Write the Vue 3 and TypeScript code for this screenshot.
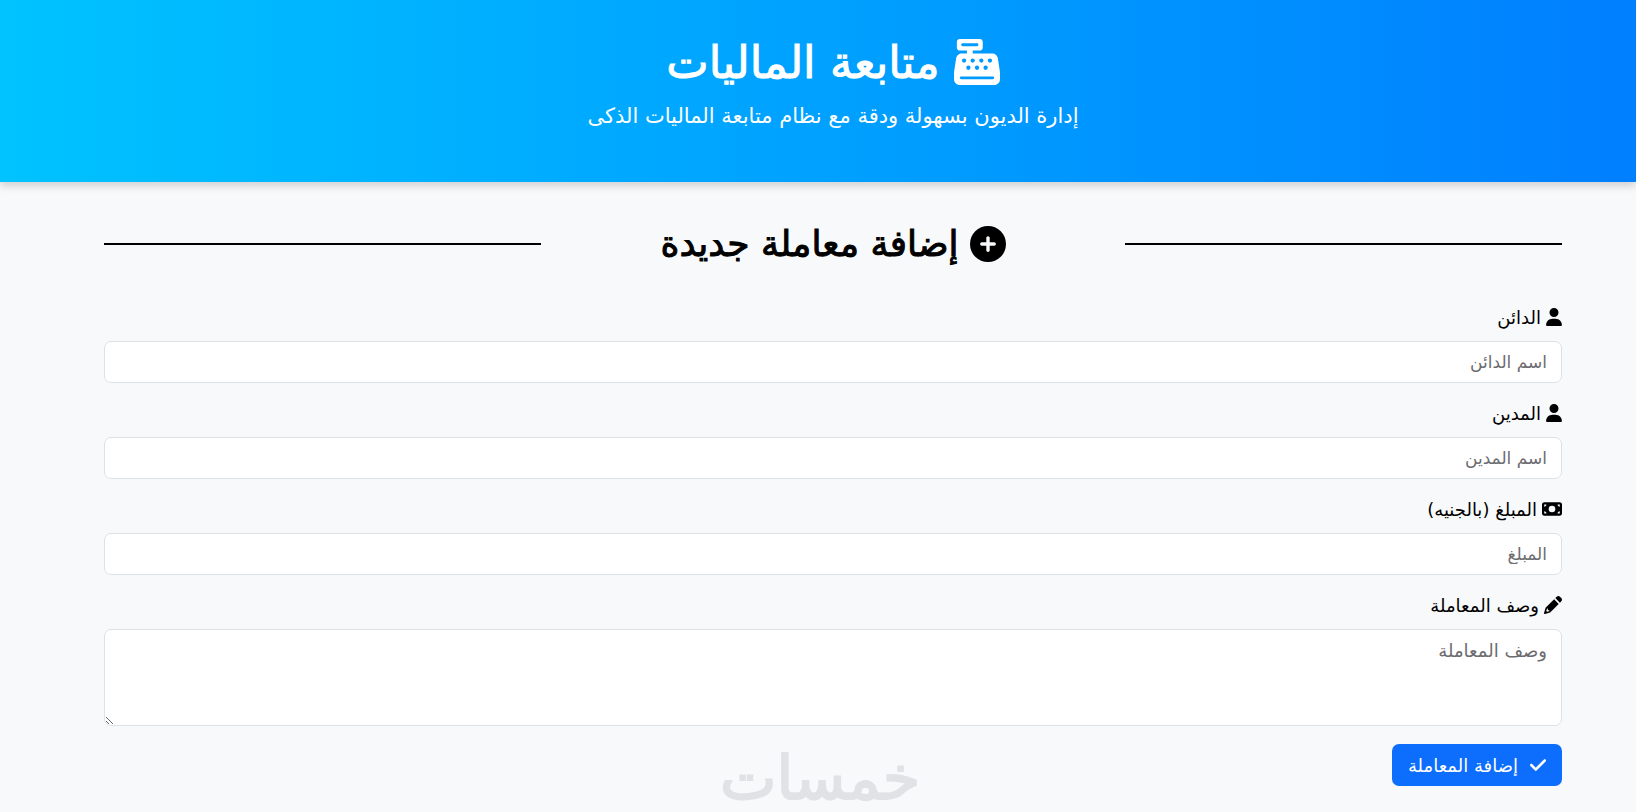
<script setup lang="ts">
interface Field {
  id: string
  label: string
  placeholder: string
  icon: 'person' | 'money' | 'pencil'
  type: 'text' | 'number' | 'area'
}

const fields: Field[] = [
  { id: 'creditor', label: 'الدائن', placeholder: 'اسم الدائن', icon: 'person', type: 'text' },
  { id: 'debtor', label: 'المدين', placeholder: 'اسم المدين', icon: 'person', type: 'text' },
  { id: 'amount', label: 'المبلغ (بالجنيه)', placeholder: 'المبلغ', icon: 'money', type: 'number' },
  { id: 'details', label: 'وصف المعاملة', placeholder: 'وصف المعاملة', icon: 'pencil', type: 'area' },
]
</script>

<template>
  <div class="page" dir="rtl" lang="ar">
    <header class="hero">
      <h1 class="hero-title">
        <svg class="hero-icon" viewBox="0 0 512 512" aria-hidden="true">
          <path fill="currentColor" d="M64 0C46.300 0 32 14.300 32 32V96c0 17.700 14.300 32 32 32h80v32H87c-31.600 0-58.500 23.100-63.300 54.400L1.100 364.100C.4 368.800 0 373.600 0 378.400V448c0 35.300 28.700 64 64 64H448c35.300 0 64-28.700 64-64V378.400c0-4.800-.4-9.600-1.100-14.400L488.200 214.400C483.500 183.100 456.600 160 425 160H208V128h80c17.700 0 32-14.300 32-32V32c0-17.700-14.300-32-32-32H64zM96 48H256c8.800 0 16 7.200 16 16s-7.200 16-16 16H96c-8.800 0-16-7.200-16-16s7.200-16 16-16zM64 432c0-8.800 7.200-16 16-16H432c8.800 0 16 7.200 16 16s-7.200 16-16 16H80c-8.800 0-16-7.200-16-16zm48-168a24 24 0 1 1 0-48 24 24 0 1 1 0 48zm120-24a24 24 0 1 1-48 0 24 24 0 1 1 48 0zm-72 104a24 24 0 1 1 0-48 24 24 0 1 1 0 48zM328 240a24 24 0 1 1-48 0 24 24 0 1 1 48 0zm-72 104a24 24 0 1 1 0-48 24 24 0 1 1 0 48zM424 240a24 24 0 1 1-48 0 24 24 0 1 1 48 0zm-72 104a24 24 0 1 1 0-48 24 24 0 1 1 0 48z" />
        </svg>
        <span>متابعة الماليات</span>
      </h1>
      <p class="hero-lead">إدارة الديون بسهولة ودقة مع نظام متابعة الماليات الذكى</p>
    </header>

    <main class="content">
      <div class="section-head">
        <h2 class="section-title">
          <svg class="section-icon" viewBox="0 0 512 512" aria-hidden="true">
            <path fill="currentColor" d="M256 512A256 256 0 1 0 256 0a256 256 0 1 0 0 512zM232 344V280H168c-13.300 0-24-10.700-24-24s10.700-24 24-24h64V168c0-13.300 10.700-24 24-24s24 10.700 24 24v64h64c13.300 0 24 10.700 24 24s-10.700 24-24 24H280v64c0 13.300-10.700 24-24 24s-24-10.700-24-24z" />
          </svg>
          <span>إضافة معاملة جديدة</span>
        </h2>
      </div>

      <form class="form" @submit.prevent>
        <div v-for="f in fields" :key="f.id" class="field">
          <label class="label" :for="f.id">
            <svg v-if="f.icon === 'person'" class="icon person" viewBox="0 0 448 512" aria-hidden="true">
              <path fill="currentColor" d="M224 256A128 128 0 1 0 224 0a128 128 0 1 0 0 256zm-45.700 48C79.800 304 0 383.800 0 482.300C0 498.700 13.300 512 29.700 512H418.300c16.400 0 29.700-13.300 29.700-29.700C448 383.800 368.200 304 269.700 304H178.300z" />
            </svg>
            <svg v-else-if="f.icon === 'money'" class="icon money" viewBox="0 0 576 512" aria-hidden="true">
              <path fill="currentColor" fill-rule="evenodd" d="M64 64C28.700 64 0 92.700 0 128V384c0 35.300 28.700 64 64 64H512c35.300 0 64-28.700 64-64V128c0-35.300-28.700-64-64-64H64zm64 320H64V320c35.300 0 64 28.700 64 64zM64 192V128h64c0 35.300-28.700 64-64 64zM448 384c0-35.300 28.700-64 64-64v64H448zm64-192c-35.300 0-64-28.700-64-64h64v64zM288 160a96 96 0 1 1 0 192 96 96 0 1 1 0-192z" />
            </svg>
            <svg v-else class="icon pencil" viewBox="0 0 512 512" aria-hidden="true">
              <path fill="currentColor" d="M362.700 19.300L322 60 452 190l40.700-40.700c25-25 25-65.500 0-90.500L453.300 19.300c-25-25-65.500-25-90.500 0zM288 94L58.600 323.500c-10.400 10.400-18 23.300-22.200 37.400L1 481.200C-1.500 489.700 .8 498.800 7 505s15.300 8.500 23.700 6.100l120.300-35.400c14.100-4.200 27-11.800 37.400-22.200L418 224zM156 410v10c0 6-4 10-10 12l-56 16c-12-4-20-12-24-24l16-56c2-6 7-10 14-10h12v26c0 14 12 26 26 26z" />
            </svg>
            <span>{{ f.label }}</span>
          </label>
          <textarea v-if="f.type === 'area'" :id="f.id" class="control area" rows="3" :placeholder="f.placeholder"></textarea>
          <input v-else :id="f.id" class="control" :type="f.type" :placeholder="f.placeholder" />
        </div>

        <button class="submit" type="submit">
          <svg class="icon check" viewBox="0 0 448 512" aria-hidden="true">
            <path fill="currentColor" stroke="currentColor" stroke-width="16" d="M438.600 105.400c12.500 12.500 12.500 32.800 0 45.300l-256 256c-12.500 12.500-32.800 12.500-45.300 0l-128-128c-12.500-12.500-12.500-32.800 0-45.300s32.800-12.500 45.300 0L160 338.700 393.400 105.400c12.500-12.500 32.800-12.500 45.300 0z" />
          </svg>
          <span>إضافة المعاملة</span>
        </button>
      </form>
    </main>

    <div class="watermark">خمسات</div>
  </div>
</template>

<style>
body {
  margin: 0;
  background: #f8f9fb;
}
</style>

<style scoped>
.page {
  position: relative;
  min-height: 100vh;
  box-sizing: border-box;
  overflow: hidden;
  background: #f8f9fb;
  color: #000;
  font-family: "DejaVu Sans", sans-serif;
  font-size: 18px;
}

.hero {
  box-sizing: border-box;
  padding: 32px 74px 50px 104px;
  background: linear-gradient(to left, #007fff, #00c3ff);
  box-shadow: 0 4px 8px rgba(0, 0, 0, 0.16);
  color: #fff;
  text-align: center;
}

.hero-title {
  display: flex;
  align-items: center;
  justify-content: center;
  gap: 14px;
  height: 60px;
  margin: 0;
  font-size: 45px;
  font-weight: 400;
  -webkit-text-stroke: 1px currentColor;
}

.hero-icon {
  width: 46px;
  height: 46px;
}

.hero-lead {
  margin: 8px 0 0;
  font-size: 21px;
  line-height: 32px;
}

.content {
  padding: 32px 74px 24px 104px;
}

.section-head {
  display: flex;
  align-items: center;
  height: 60px;
}

.section-head::before,
.section-head::after {
  content: "";
  flex: 0 0 30%;
  height: 2px;
  background: #000;
}

.section-title {
  flex: 1;
  display: flex;
  align-items: center;
  justify-content: center;
  gap: 11px;
  margin: 0;
  font-size: 36px;
  line-height: 40px;
  font-weight: 400;
  -webkit-text-stroke: 1px currentColor;
}

.hero-icon,
.section-icon {
  flex: none;
}

.section-icon {
  width: 36px;
  height: 36px;
}

.form {
  padding-top: 31px;
}

.field {
  margin-bottom: 18px;
}

.label {
  display: flex;
  align-items: center;
  gap: 5px;
  width: fit-content;
  height: 24px;
  margin-bottom: 12px;
}

.icon {
  height: 18px;
  flex: none;
}

.person,
.check {
  width: 16px;
}

.money {
  width: 20px;
}

.pencil {
  width: 18px;
}

.control {
  display: block;
  width: 100%;
  height: 42px;
  box-sizing: border-box;
  padding: 6px 14px;
  border: 1px solid #dee2e6;
  border-radius: 7px;
  background: #fff;
  color: #212529;
  font: inherit;
  font-size: 17px;
  line-height: 27px;
}

.control::placeholder {
  color: #6c6c70;
  opacity: 1;
}

.control[type="number"] {
  appearance: textfield;
}

.area {
  height: 97px;
  padding-top: 7px;
  font-size: 18px;
  resize: vertical;
}

.submit {
  display: flex;
  align-items: center;
  gap: 12px;
  height: 42px;
  padding: 0 16px;
  border: 0;
  border-radius: 7px;
  background: #0d6efd;
  color: #fff;
  font: inherit;
}

.watermark {
  position: absolute;
  left: 720px;
  bottom: 6px;
  color: #e1e2e5;
  font-size: 60px;
  line-height: 56px;
  -webkit-text-stroke: 2px currentColor;
}
</style>
